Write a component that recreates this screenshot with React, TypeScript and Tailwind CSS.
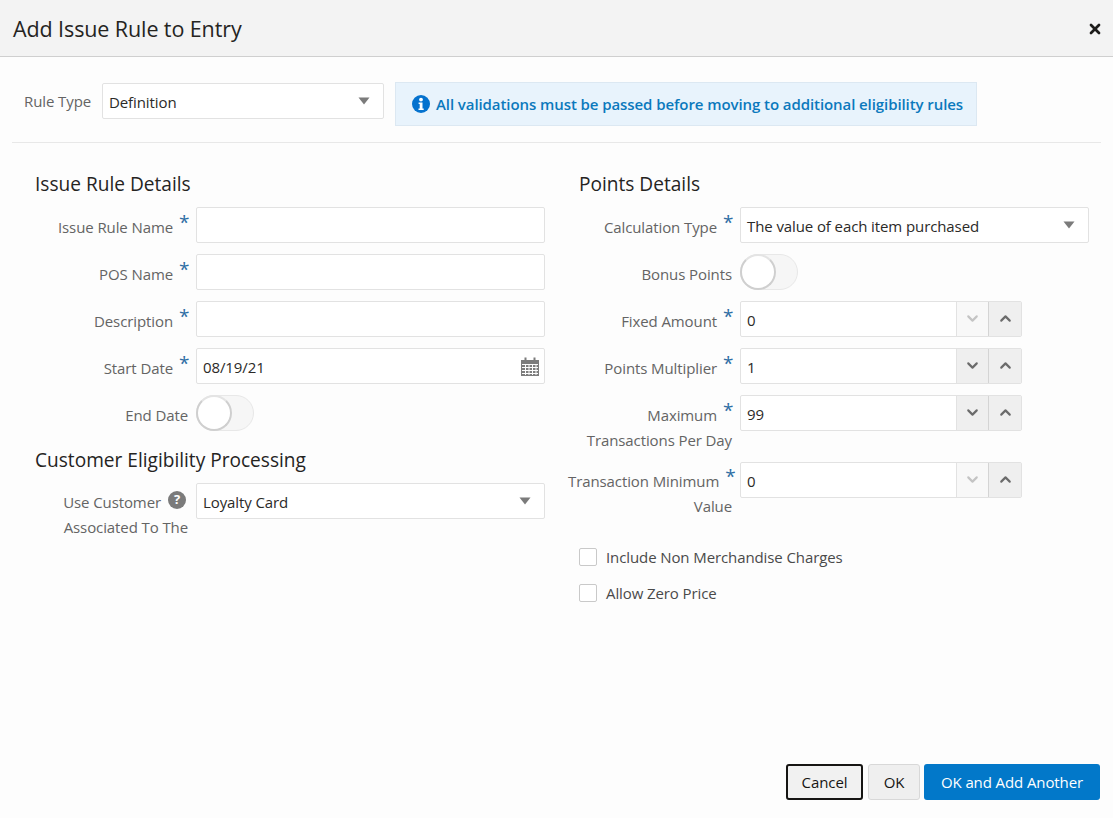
import { ChevronDown, ChevronUp, X } from "lucide-react";
import type { ReactNode } from "react";

function Caret() {
  return (
    <svg width="12" height="8" viewBox="0 0 12 8" className="shrink-0">
      <path d="M0.5 0.5h11L6 7.5z" fill="#7b7b7b" />
    </svg>
  );
}

function CalendarIcon() {
  return (
    <svg width="20" height="19" viewBox="0 0 20 19" className="shrink-0">
      <path d="M1 3h3.5V0.5h2V3h7V0.5h2V3H19v16H1z" fill="#7d7d7d" />
      <path
        d="M2 7.5h16M2 10.5h16M2 13.5h16M2 16.5h16M5.5 7v11M9 7v11M12.500 7v11M16 7v11"
        stroke="#fdfdfd"
        strokeWidth="1"
        fill="none"
      />
    </svg>
  );
}

function InfoIcon() {
  return (
    <svg width="18" height="18" viewBox="0 0 18 18" className="ml-[1px] shrink-0">
      <circle cx="9" cy="9" r="9" fill="#0572ce" />
      <circle cx="9" cy="4.6" r="1.9" fill="#fff" />
      <path d="M6.6 7.4h3.9v6h1.2v1.6H6.5v-1.6h1.2V9H6.6z" fill="#fff" />
    </svg>
  );
}

function Label({ lines, mark, tight }: { lines: string[]; mark?: "required" | "help"; tight?: boolean }) {
  return (
    <div className={`w-[164px] shrink-0 text-right text-[#646464] leading-[25px] ${tight ? "pt-[7px]" : "pt-[8px]"}`}>
      {lines.map((line, i) => (
        <div key={line} className="whitespace-nowrap">
          {line}
          {i === 0 && mark === "required" && (
            <span className="relative top-[-4px] ml-[6px] inline-block w-[9px] text-left text-[19px] leading-[10px] text-[#2e6da4]">
              *
            </span>
          )}
          {i === 0 && mark === "help" && (
            <span className="relative top-[-4px] mr-[2px] ml-[7px] inline-flex h-[18px] w-[18px] items-center justify-center rounded-full bg-[#7b7b7b] align-middle text-[13px] leading-none font-bold text-white">
              ?
            </span>
          )}
        </div>
      ))}
    </div>
  );
}

function Row({ label, mark, height, tight, children }: { label: string[]; mark?: "required" | "help"; height: string; tight?: boolean; children: ReactNode }) {
  return (
    <div className={`flex items-start gap-2 ${height}`}>
      <Label lines={label} mark={mark} tight={tight} />
      {children}
    </div>
  );
}

function TextBox({ value, icon }: { value?: string; icon?: ReactNode }) {
  return (
    <div className="flex h-9 w-[349px] items-center justify-between rounded-[2px] border border-[#e2e2e2] bg-white pr-[4px] pl-[6px] text-[#2b2a28]">
      <span className="pt-[2px]">{value}</span>
      {icon}
    </div>
  );
}

function Select({ value, wide }: { value: string; wide?: boolean }) {
  return (
    <div className={`flex h-9 items-center justify-between rounded-[2px] border border-[#e2e2e2] bg-white pr-[13px] pl-[6px] text-[#2b2a28] ${wide ? "w-[349px]" : "w-[282px]"}`}>
      <span className="pt-[2px]">{value}</span>
      <Caret />
    </div>
  );
}

function Toggle() {
  return (
    <div className="h-9 w-[58px] rounded-full border border-[#e8e8e8] bg-[#f6f6f6]">
      <div className="ml-[-1px] mt-[-1px] h-9 w-9 rounded-full border-2 border-[#cfcfcf] border-t-[#e4e4e4] bg-white" />
    </div>
  );
}

function Spinner({ value, atMin }: { value: string; atMin?: boolean }) {
  return (
    <div className="flex h-9 w-[282px] rounded-[2px] border border-[#e2e2e2] bg-white text-[#2b2a28]">
      <div className="flex flex-1 items-center pt-[2px] pl-[6px]">{value}</div>
      <div className={`flex w-[32px] items-center justify-center border-l border-[#e2e2e2] pb-[2px] ${atMin ? "bg-[#f8f8f8] text-[#c4c4c4]" : "bg-[#efefef] text-[#6b6b6b]"}`}>
        <ChevronDown size={17} strokeWidth={3} />
      </div>
      <div className="flex w-[33px] items-center justify-center border-l border-[#d4d4d4] bg-[#efefef] pb-[2px] text-[#6b6b6b]">
        <ChevronUp size={17} strokeWidth={3} />
      </div>
    </div>
  );
}

function Heading({ children }: { children: ReactNode }) {
  return <h2 className="ml-[11px] h-[41px] text-[19.100px] leading-[36px] tracking-normal text-[#25241f]">{children}</h2>;
}

function Check({ label }: { label: string }) {
  return (
    <label className="flex h-9 items-center gap-[9px] text-[#4a4a4a]">
      <span className="h-[18px] w-[18px] rounded-[2px] border border-[#c9c9c9] bg-white" />
      <span className="pt-[1px]">{label}</span>
    </label>
  );
}

export default function App() {
  return (
    <div className="flex h-[818px] flex-col overflow-hidden bg-[#fdfdfd] font-['Open_Sans',sans-serif] text-[15px] tracking-[-0.1px]">
      <header className="flex h-[57px] shrink-0 items-center justify-between border-b border-[#cfcfcf] bg-[#f3f3f3] pr-[10px] pl-[13px]">
        <h1 className="pt-[2px] text-[21.500px] text-[#25241f]">Add Issue Rule to Entry</h1>
        <X size={16} strokeWidth={4} className="mt-[2px] text-[#1d1c1a]" />
      </header>

      <div className="mx-[12px] mt-[25px] flex h-[61px] shrink-0 items-start border-b border-[#e8e8e8] pl-[12px]">
        <span className="w-[78px] pt-[7px] leading-[25px] text-[#646464]">Rule Type</span>
        <div className="mt-[1px]">
          <Select value="Definition" />
        </div>
        <div className="ml-[11px] flex h-[44px] w-[582px] items-center gap-[6px] border border-[#dce8f2] bg-[#e8f3fc] px-[15px] font-semibold text-[#0b79bd]">
          <InfoIcon />
          <span className="pt-[1px] tracking-[-0.08px] whitespace-nowrap">All validations must be passed before moving to additional eligibility rules</span>
        </div>
      </div>

      <div className="mt-[23px] flex flex-1">
        <section className="ml-[24px] w-[544px] shrink-0">
          <Heading>Issue Rule Details</Heading>
          <Row label={["Issue Rule Name"]} mark="required" height="h-[47px]"><TextBox /></Row>
          <Row label={["POS Name"]} mark="required" height="h-[47px]"><TextBox /></Row>
          <Row label={["Description"]} mark="required" height="h-[47px]"><TextBox /></Row>
          <Row label={["Start Date"]} mark="required" height="h-[47px]"><TextBox value="08/19/21" icon={<CalendarIcon />} /></Row>
          <Row label={["End Date"]} height="h-[47px]"><Toggle /></Row>
          <Heading>Customer Eligibility Processing</Heading>
          <Row label={["Use Customer", "Associated To The"]} mark="help" height="h-[60px]" tight><Select value="Loyalty Card" wide /></Row>
        </section>

        <section className="flex-1">
          <Heading>Points Details</Heading>
          <Row label={["Calculation Type"]} mark="required" height="h-[47px]"><Select value="The value of each item purchased" wide /></Row>
          <Row label={["Bonus Points"]} height="h-[47px]"><Toggle /></Row>
          <Row label={["Fixed Amount"]} mark="required" height="h-[47px]"><Spinner value="0" atMin /></Row>
          <Row label={["Points Multiplier"]} mark="required" height="h-[47px]"><Spinner value="1" /></Row>
          <Row label={["Maximum", "Transactions Per Day"]} mark="required" height="h-[67px]"><Spinner value="99" /></Row>
          <Row label={["Transaction Minimum", "Value"]} mark="required" height="h-[67px]" tight><Spinner value="0" atMin /></Row>
          <div className="ml-[11px] mt-[10px]">
            <Check label="Include Non Merchandise Charges" />
          </div>
          <div className="ml-[11px]">
            <Check label="Allow Zero Price" />
          </div>
        </section>
      </div>

      <footer className="flex shrink-0 justify-end gap-1 pr-[13px] pb-[18px]">
        <button className="ml-[-1px] mr-[1px] h-9 w-[77px] rounded-[3px] border-2 border-[#161513] bg-[#f1f1f1] pt-[1px] text-[#161513]">Cancel</button>
        <button className="h-9 w-[52px] rounded-[3px] border border-[#d8d8d8] bg-[#efefef] pt-[1px] text-[#161513]">OK</button>
        <button className="h-9 w-[176px] rounded-[3px] bg-[#0278c9] pt-[1px] text-white">OK and Add Another</button>
      </footer>
    </div>
  );
}
